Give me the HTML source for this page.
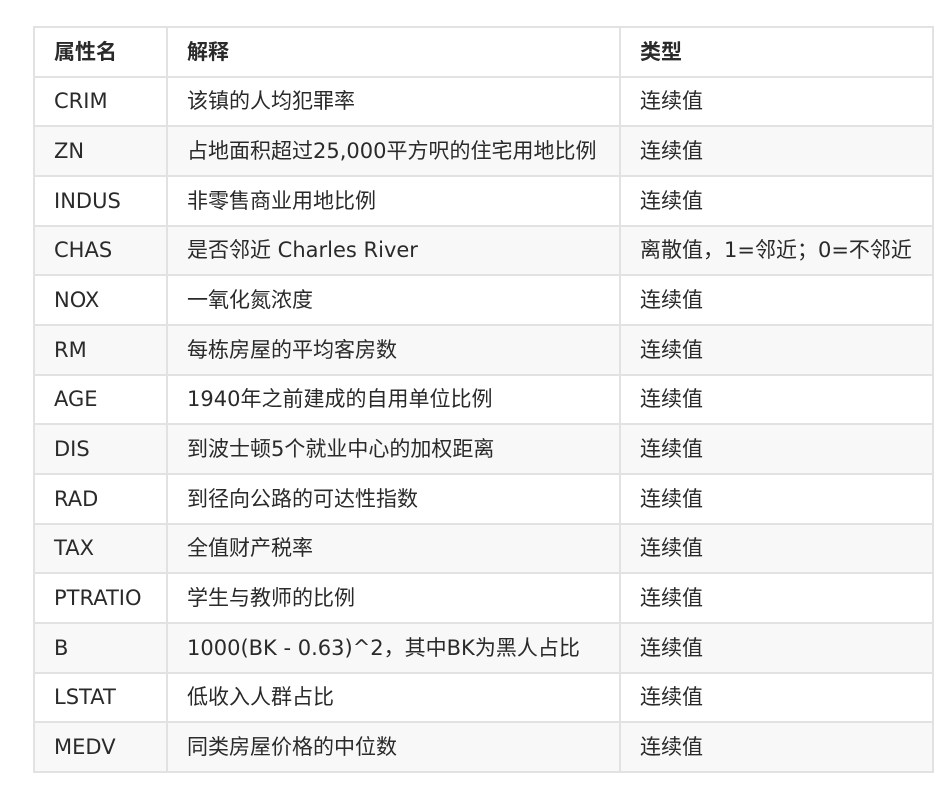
<!DOCTYPE html>
<html><head><meta charset="utf-8"><style>
body{margin:0;background:#fff;width:947px;height:787px;overflow:hidden}
table{position:absolute;left:33px;top:26px;width:899px;table-layout:fixed;border-collapse:collapse;font-family:"DejaVu Sans","Noto Sans CJK SC",sans-serif;font-size:21px;color:#2a2a2a}
td,th{border:2px solid #e2e2e2;height:47.7px;line-height:24px;padding:0 0 0 19px;text-align:left;white-space:nowrap;vertical-align:middle;box-sizing:border-box;overflow:hidden}
tr{height:49.67px}
th{font-weight:bold}
tr:nth-child(odd) td{background:#f8f8f8}
</style></head><body>
<table>
<colgroup><col style="width:133px"><col style="width:453px"><col style="width:313px"></colgroup>
<tr><th>属性名</th><th>解释</th><th>类型</th></tr>
<tr><td>CRIM</td><td>该镇的人均犯罪率</td><td>连续值</td></tr>
<tr><td>ZN</td><td>占地面积超过25,000平方呎的住宅用地比例</td><td>连续值</td></tr>
<tr><td>INDUS</td><td>非零售商业用地比例</td><td>连续值</td></tr>
<tr><td>CHAS</td><td>是否邻近 Charles River</td><td>离散值，1=邻近；0=不邻近</td></tr>
<tr><td>NOX</td><td>一氧化氮浓度</td><td>连续值</td></tr>
<tr><td>RM</td><td>每栋房屋的平均客房数</td><td>连续值</td></tr>
<tr><td>AGE</td><td>1940年之前建成的自用单位比例</td><td>连续值</td></tr>
<tr><td>DIS</td><td>到波士顿5个就业中心的加权距离</td><td>连续值</td></tr>
<tr><td>RAD</td><td>到径向公路的可达性指数</td><td>连续值</td></tr>
<tr><td>TAX</td><td>全值财产税率</td><td>连续值</td></tr>
<tr><td>PTRATIO</td><td>学生与教师的比例</td><td>连续值</td></tr>
<tr><td>B</td><td>1000(BK - 0.63)^2，其中BK为黑人占比</td><td>连续值</td></tr>
<tr><td>LSTAT</td><td>低收入人群占比</td><td>连续值</td></tr>
<tr><td>MEDV</td><td>同类房屋价格的中位数</td><td>连续值</td></tr>
</table>
</body></html>
